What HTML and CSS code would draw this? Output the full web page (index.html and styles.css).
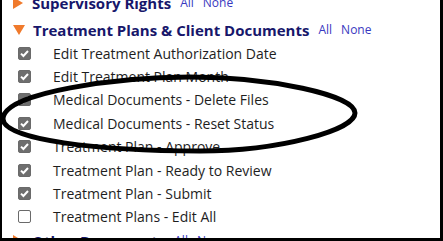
FILE: index.html
```html
<!DOCTYPE html>
<html lang="en">

<head>
  <meta charset="UTF-8" />
  <title>Permissions</title>
  <link rel="stylesheet" href="styles.css">
</head>

<body>
  <div class="frame">
    <div class="perm-list">
      <section class="group collapsed">
        <div class="group-head">
          <span class="caret caret-right"></span>
          <span class="group-title">Supervisory Rights</span>
          <a class="pick">All</a>
          <a class="pick">None</a>
        </div>
      </section>

      <section class="group">
        <div class="group-head">
          <span class="caret caret-down"></span>
          <span class="group-title">Treatment Plans &amp; Client Documents</span>
          <a class="pick">All</a>
          <a class="pick">None</a>
        </div>
        <ul class="items">
          <li><span class="box checked"></span>Edit Treatment Authorization Date</li>
          <li><span class="box checked"></span>Edit Treatment Plan Month</li>
          <li><span class="box checked"></span>Medical Documents - Delete Files</li>
          <li><span class="box checked"></span>Medical Documents - Reset Status</li>
          <li><span class="box checked"></span>Treatment Plan - Approve</li>
          <li><span class="box checked"></span>Treatment Plan - Ready to Review</li>
          <li><span class="box checked"></span>Treatment Plan - Submit</li>
          <li><span class="box"></span>Treatment Plans - Edit All</li>
        </ul>
      </section>

      <section class="group collapsed">
        <div class="group-head">
          <span class="caret caret-right"></span>
          <span class="group-title">Other Documents</span>
          <a class="pick">All</a>
          <a class="pick">None</a>
        </div>
      </section>
    </div>

    <!-- hand-drawn circle around the two medical document rows -->
    <svg class="scribble" width="443" height="241" viewBox="0 0 443 241">
      <path d="M 3 119 C 3 92, 120 77, 190 77 C 270 77, 355 95, 355 113 C 355 130, 280 151, 200 151 C 100 151, 3 140, 3 119 Z"
        fill="none" stroke="#000" stroke-width="5" />
    </svg>
  </div>
</body>

</html>
```

FILE: styles.css
```css
body {
  margin: 0;
  background: #fff;
  font-family: 'Open Sans', 'Noto Sans', sans-serif;
}

.frame {
  position: relative;
  box-sizing: border-box;
  width: 443px;
  height: 241px;
  border-left: 2px solid #000;
  border-right: 3px solid #000;
  border-bottom: 3px solid #000;
  overflow: hidden;
}

.perm-list {
  margin-top: -9.5px;
}

.group.collapsed {
  padding-bottom: 3px;
}

.group-head {
  display: flex;
  align-items: center;
  height: 24px;
  padding-left: 11px;
}

.caret {
  width: 0;
  height: 0;
  margin-right: 8px;
}

.caret-down {
  border-left: 6px solid transparent;
  border-right: 6px solid transparent;
  border-top: 10px solid #f07a2c;
}

.caret-right {
  border-top: 6px solid transparent;
  border-bottom: 6px solid transparent;
  border-left: 10px solid #f07a2c;
  margin-right: 9px;
}

.group-title {
  font-size: 15px;
  font-weight: 700;
  color: #17176b;
  margin-right: 9px;
}

.pick {
  font-size: 12px;
  color: #3838c0;
  margin-right: 9px;
}

.items {
  list-style: none;
  margin: 0;
  padding: 0;
}

.items li {
  display: flex;
  align-items: center;
  height: 23.4px;
  padding-left: 16px;
  font-size: 14px;
  color: #1e1e1e;
}

.box {
  box-sizing: border-box;
  width: 13px;
  height: 13px;
  margin-right: 22px;
  border: 1px solid #6a6a6a;
  border-radius: 2px;
  background: #fff;
}

.box.checked {
  background: #6e6e6e url("data:image/svg+xml;utf8,<svg xmlns='http://www.w3.org/2000/svg' viewBox='0 0 13 13'><path d='M3 6.6 L5.4 9 L10 4' fill='none' stroke='white' stroke-width='2'/></svg>") center/13px 13px no-repeat;
}

.scribble {
  position: absolute;
  left: -2px;
  top: 0;
}
```
